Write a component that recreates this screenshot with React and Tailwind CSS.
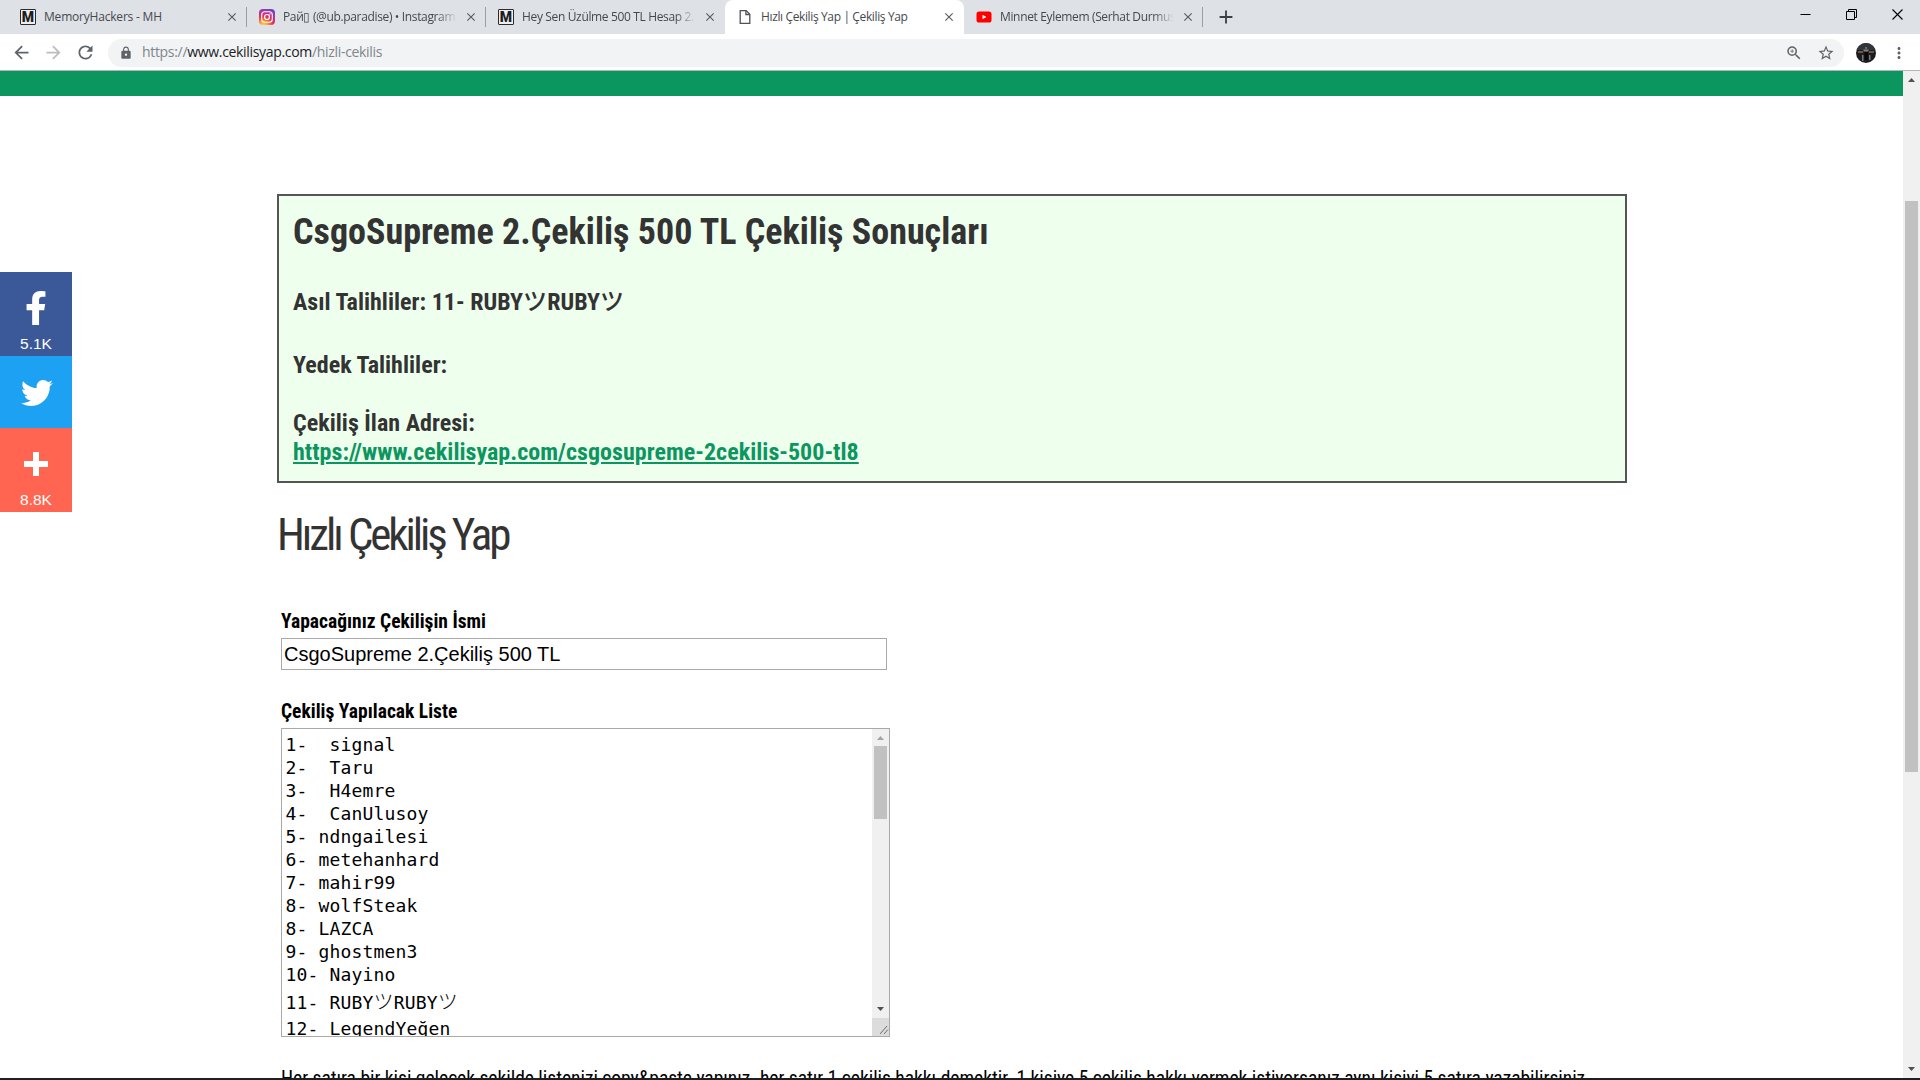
import {
  MdArrowBack,
  MdArrowForward,
  MdRefresh,
  MdLock,
  MdZoomIn,
  MdStarBorder,
  MdMoreVert,
  MdClose,
  MdAdd,
} from "react-icons/md";
import { FaFacebookF, FaTwitter } from "react-icons/fa";

function MemoryIcon() {
  return (
    <span className="flex h-4 w-4 items-center justify-center rounded-[1px] border border-[#2b2b2b] bg-[#eceef0] font-['Roboto'] text-[14px] leading-none font-black text-[#1d1d1f]">
      M
    </span>
  );
}

function InstagramIcon() {
  return (
    <svg viewBox="0 0 16 16" className="h-4 w-4">
      <defs>
        <radialGradient id="ig" cx="0.28" cy="1.05" r="1.15">
          <stop offset="0" stopColor="#ffd65c" />
          <stop offset="0.25" stopColor="#fb9a35" />
          <stop offset="0.5" stopColor="#e9374f" />
          <stop offset="0.72" stopColor="#c22d95" />
          <stop offset="1" stopColor="#6247c8" />
        </radialGradient>
      </defs>
      <rect width="16" height="16" rx="4" fill="url(#ig)" />
      <rect x="2.7" y="2.7" width="10.6" height="10.6" rx="3" fill="none" stroke="#fff" strokeWidth="1.1" />
      <circle cx="8" cy="8" r="2.5" fill="none" stroke="#fff" strokeWidth="1.2" />
      <circle cx="11" cy="5" r="0.7" fill="#fff" />
    </svg>
  );
}

function DocumentIcon() {
  return (
    <svg viewBox="0 0 16 16" className="h-4 w-4" fill="none" stroke="#4f5257" strokeWidth="1.3">
      <path d="M3.2 1.6h6l3.6 3.6v9.2H3.2z" />
      <path d="M8.9 1.6v3.9h3.9" />
    </svg>
  );
}

function YoutubeIcon() {
  return (
    <svg viewBox="0 0 16 16" className="h-4 w-4">
      <rect x="0.5" y="2.5" width="15" height="11" rx="2.6" fill="#f00" />
      <path d="M6.5 5.7v4.6L10.4 8z" fill="#fff" />
    </svg>
  );
}

const tabs = [
  { title: "MemoryHackers - MH", icon: MemoryIcon, edge: "border-[#9b9ea3]", spacing: "tracking-[-0.2px]" },
  { title: "Рай▯ (@ub.paradise) • Instagram", icon: InstagramIcon, edge: "border-[#9b9ea3]", spacing: "tracking-[-0.35px]", fade: true },
  { title: "Hey Sen Üzülme 500 TL Hesap 2.", icon: MemoryIcon, edge: "border-transparent", spacing: "tracking-[-0.35px]", fade: true },
  { title: "Hızlı Çekiliş Yap | Çekiliş Yap", icon: DocumentIcon, edge: "border-transparent", spacing: "tracking-[-0.37px]", active: true },
  { title: "Minnet Eylemem (Serhat Durmus", icon: YoutubeIcon, edge: "border-[#9b9ea3]", spacing: "tracking-[-0.35px]", fade: true },
];

function Tab({ title, icon: Icon, edge, spacing, active, fade }) {
  return (
    <div className={`flex h-[34px] w-[239px] items-center pl-3 ${active ? "rounded-t-lg bg-white" : ""}`}>
      <Icon />
      <span
        className={`ml-2 w-[174px] text-[12px] leading-5 whitespace-nowrap text-[#45494d] ${spacing} ${
          fade ? "[mask-image:linear-gradient(to_right,black_88%,transparent)]" : ""
        }`}
      >
        {title}
      </span>
      <MdClose className="ml-[7px] h-[14px] w-[14px] text-[#5a5d61]" />
      <span className={`ml-auto h-5 border-r ${edge}`} />
    </div>
  );
}

function TabStrip() {
  return (
    <div className="flex h-[34px] bg-[#dee1e6] pl-2">
      {tabs.map((tab) => (
        <Tab key={tab.title} {...tab} />
      ))}
      <MdAdd className="mt-[6px] ml-[12px] h-[22px] w-[22px] text-[#3c4043]" />
      <div className="mr-[17px] ml-auto flex h-[29px] items-center gap-[35px]">
        <svg viewBox="0 0 11 11" className="h-[11px] w-[11px]" stroke="#000">
          <path d="M0.5 5.5h10" />
        </svg>
        <svg viewBox="0 0 11 11" className="h-[11px] w-[11px]" fill="none" stroke="#000">
          <path d="M0.5 2.5h8v8h-8zM2.5 2.5v-2h8v8h-2" />
        </svg>
        <svg viewBox="0 0 11 11" className="h-[11px] w-[11px]" stroke="#000" strokeWidth="1.1">
          <path d="M0.5 0.5l10 10M10.5 0.5l-10 10" />
        </svg>
      </div>
    </div>
  );
}

function Avatar() {
  return (
    <svg viewBox="0 0 20 20" className="ml-3 h-5 w-5">
      <defs>
        <clipPath id="avatar">
          <circle cx="10" cy="10" r="10" />
        </clipPath>
      </defs>
      <g clipPath="url(#avatar)">
        <rect width="20" height="20" fill="#1d1d20" />
        <path d="M0 0h20v7H0z" fill="#30363b" />
        <path d="M2 8h5v2H2zM13 8h5v2h-5z" fill="#6d5540" />
        <path d="M7.500 6.500h5v2h-5z" fill="#7c8489" />
        <path d="M6 12h1.500v6H6zM13 12h1.500v5H13z" fill="#77797d" />
        <path d="M9.300 4h1.500v2H9.300z" fill="#a0765a" />
        <path d="M8.500 9h3.500v8H8.500z" fill="#08080a" />
      </g>
    </svg>
  );
}

function Toolbar() {
  return (
    <div className="flex h-9 items-center border-b border-[#b6b4b6] bg-white pl-[11px] text-[#5f6368]">
      <MdArrowBack className="h-[21px] w-[21px]" />
      <MdArrowForward className="ml-[11px] h-[21px] w-[21px] text-[#babcbe]" />
      <MdRefresh className="ml-[11px] h-[21px] w-[21px]" />
      <div className="ml-3 flex h-7 w-[1736px] items-center rounded-full bg-[#f1f3f4] pl-[11px]">
        <MdLock className="h-[14px] w-[14px]" />
        <span className="mb-px ml-[9px] text-[14px] leading-5 tracking-[-0.32px] text-[#80868b]">
          https://<span className="text-[#202124]">www.cekilisyap.com</span>/hizli-cekilis
        </span>
        <MdZoomIn className="ml-auto h-[18px] w-[18px]" />
        <MdStarBorder className="mr-[9px] ml-[14px] h-[18px] w-[18px]" />
      </div>
      <Avatar />
      <MdMoreVert className="ml-[14px] h-[18px] w-[18px]" />
    </div>
  );
}

function Triangle({ down, muted }) {
  return (
    <svg viewBox="0 0 7 4" className={`h-1 w-[7px] ${muted ? "text-[#a3a3a3]" : "text-[#505050]"} ${down ? "rotate-180" : ""}`}>
      <path d="M0 4L3.500 0L7 4z" fill="currentColor" />
    </svg>
  );
}

function SocialBar() {
  return (
    <aside className="mt-[176px] h-60 w-[72px] font-['Liberation_Sans',sans-serif] text-[15.500px] leading-[18px] text-white">
      <div className="flex h-[84px] flex-col items-center bg-[#3b5998] pt-[19px]">
        <FaFacebookF className="h-[34px] w-[22px]" preserveAspectRatio="none" />
        <span className="mt-[10px]">5.1K</span>
      </div>
      <div className="flex h-[72px] items-center justify-center bg-[#1da1f2] pt-px pl-[2px]">
        <FaTwitter className="h-8 w-8" />
      </div>
      <div className="flex h-[84px] flex-col items-center bg-[#ff6550] pt-6">
        <svg viewBox="0 0 24 24" className="h-6 w-6">
          <path d="M9 0h6v9h9v6h-9v9H9v-9H0V9h9z" fill="#fff" />
        </svg>
        <span className="mt-[15px]">8.8K</span>
      </div>
    </aside>
  );
}

function ResultBox() {
  return (
    <section className="h-[289px] border-2 border-[#555] bg-[#eeffee] pt-[15px] pl-[14px] text-[24px] leading-[29px] font-bold tracking-[0.02px] text-[#333]">
      <h2 className="text-[36px] leading-[43px]">CsgoSupreme 2.Çekiliş 500 TL Çekiliş Sonuçları</h2>
      <p className="mt-[34px]">
        Asıl Talihliler: 11- RUBY<span className="font-medium">ツ</span>RUBY<span className="font-medium">ツ</span>
      </p>
      <p className="mt-[34px]">Yedek Talihliler:</p>
      <p className="mt-[29px]">Çekiliş İlan Adresi:</p>
      <a className="text-[#0c965f] underline" href="#ilan">
        https://www.cekilisyap.com/csgosupreme-2cekilis-500-tl8
      </a>
    </section>
  );
}

const entries = [
  "1-  signal",
  "2-  Taru",
  "3-  H4emre",
  "4-  CanUlusoy",
  "5- ndngailesi",
  "6- metehanhard",
  "7- mahir99",
  "8- wolfSteak",
  "8- LAZCA",
  "9- ghostmen3",
  "10- Nayino",
];

function EntryList() {
  return (
    <div className="mt-[4px] flex h-[309px] w-[609px] border border-[#a9a9a9] bg-white">
      <div className="h-full flex-1 overflow-hidden pt-1 pl-[3.500px] font-['DejaVu_Sans_Mono','Noto_Sans_CJK_JP',monospace] text-[18px] leading-[23px] tracking-[0.16px] whitespace-pre text-black">
        {entries.map((entry) => (
          <div key={entry}>{entry}</div>
        ))}
        <div className="h-[31px] leading-8">
          11- RUBY<span className="text-[20px] font-light">ツ</span>RUBY<span className="text-[20px] font-light">ツ</span>
        </div>
        <div>12- LegendYeğen</div>
      </div>
      <div className="flex w-[17px] flex-col items-center bg-[#f0f0f0] pt-[7px]">
        <Triangle muted />
        <div className="mt-[6px] h-[73px] w-[13px] bg-[#c1c1c1]" />
        <div className="mt-auto mb-[7px]">
          <Triangle down />
        </div>
        <svg viewBox="0 0 17 18" className="h-[18px] w-[17px] bg-[#dcdcdc]" stroke="#6b6b6b" strokeWidth="1">
          <path d="M8 16l7-8M12 16l4-4.500" />
        </svg>
      </div>
    </div>
  );
}

function DrawForm() {
  return (
    <div className="pl-1 text-[19.500px] leading-6 text-black">
      <div className="mt-[48px] font-bold">Yapacağınız Çekilişin İsmi</div>
      <div className="mt-[4px] h-8 w-[606px] border border-[#a9a9a9] pl-[2px] font-['Liberation_Sans',sans-serif] text-[20px] leading-[30px]">
        CsgoSupreme 2.Çekiliş 500 TL
      </div>
      <div className="mt-[30px] font-bold">Çekiliş Yapılacak Liste</div>
      <EntryList />
      <p className="mt-[30px] tracking-[-0.02px] whitespace-nowrap">
        Her satıra bir kişi gelecek şekilde listenizi copy&amp;paste yapınız. her satır 1 çekiliş hakkı demektir. 1 kişiye 5
        çekiliş hakkı vermek istiyorsanız aynı kişiyi 5 satıra yazabilirsiniz.
      </p>
    </div>
  );
}

function PageScrollbar() {
  return (
    <div className="flex w-[17px] flex-col items-center bg-[#f0f0f0] pt-[7px] pb-[7px]">
      <Triangle />
      <div className="mt-[119px] h-[571px] w-[13px] bg-[#c1c1c1]" />
      <div className="mt-auto">
        <Triangle down />
      </div>
    </div>
  );
}

export default function App() {
  return (
    <div className="flex h-[1080px] w-[1920px] flex-col overflow-hidden bg-white font-['Open_Sans',sans-serif]">
      <TabStrip />
      <div className="h-px shrink-0 bg-white" />
      <Toolbar />
      <div className="flex h-[1007px] overflow-hidden">
        <div className="w-[1903px]">
          <div className="h-[25px] bg-[#0c965f]" />
          <div className="flex font-['Roboto','Noto_Sans_CJK_JP',sans-serif] [font-stretch:75%]">
            <SocialBar />
            <main className="ml-[205px] w-[1350px] pt-[98px]">
              <ResultBox />
              <h1 className="mt-[25px] text-[45px] leading-[54px] tracking-[-3.1px] text-[#333]">Hızlı Çekiliş Yap</h1>
              <DrawForm />
            </main>
          </div>
        </div>
        <PageScrollbar />
      </div>
      <div className="h-[2px] bg-[#1f1f1f]" />
    </div>
  );
}
